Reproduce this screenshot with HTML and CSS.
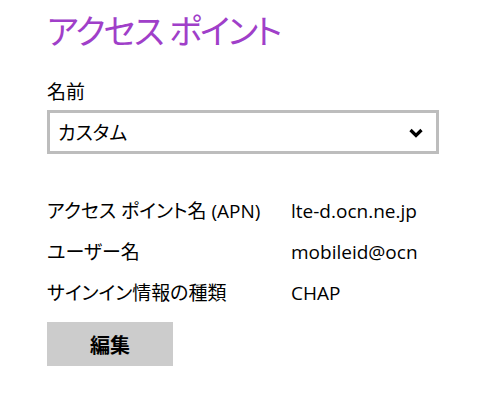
FILE: index.html
```html
<!DOCTYPE html>
<html lang="ja">
<head>
<meta charset="utf-8">
<link rel="stylesheet" href="styles.css">
</head>
<body>
<div class="page">
  <h1 class="title">アクセス ポイント</h1>
  <div class="label">名前</div>
  <div class="select">
    <span class="select-text">カスタム</span>
    <svg class="chevron" width="14" height="10" viewBox="0 0 14 10"><polyline points="1.5,2 7,7.5 12.5,2" fill="none" stroke="#000" stroke-width="3.2"/></svg>
  </div>
  <div class="rows">
    <div class="row"><span class="key">アクセス ポイント名 (APN)</span><span class="val">lte-d.ocn.ne.jp</span></div>
    <div class="row"><span class="key">ユーザー名</span><span class="val">mobileid@ocn</span></div>
    <div class="row"><span class="key">サインイン情報の種類</span><span class="val">CHAP</span></div>
  </div>
  <button class="btn">編集</button>
</div>
</body>
</html>
```
FILE: styles.css
```css
html, body {
  margin: 0;
  padding: 0;
  background: #fff;
}
body {
  font-family: "Open Sans", "Noto Sans CJK JP", sans-serif;
  font-feature-settings: "palt";
  color: #000;
}
.page {
  padding: 8px 0 0 47px;
  width: 392px;
}
.title {
  margin: 0;
  font-weight: 400;
  font-size: 34px;
  line-height: 46px;
  color: #a03fc9;
  letter-spacing: -2px;
}
.label {
  margin-top: 25px;
  font-size: 19px;
  line-height: 26px;
}
.select {
  margin-top: 5px;
  height: 44px;
  box-sizing: border-box;
  border: 3px solid #bdbdbd;
  display: flex;
  align-items: center;
  justify-content: space-between;
  padding: 0 13px 0 8px;
}
.select-text {
  font-size: 19px;
}
.chevron {
  display: block;
  margin-top: 2px;
}
.rows {
  margin-top: 43px;
  display: flex;
  flex-direction: column;
  gap: 13px;
}
.row {
  display: flex;
  font-size: 19px;
  line-height: 28px;
}
.key {
  width: 244px;
}
.btn {
  margin-top: 15px;
  width: 126px;
  height: 44px;
  border: none;
  background: #cccccc;
  font-family: "Open Sans", "Noto Sans CJK JP", sans-serif;
  font-weight: 700;
  font-size: 20px;
  color: #000;
  padding: 0;
}
```
